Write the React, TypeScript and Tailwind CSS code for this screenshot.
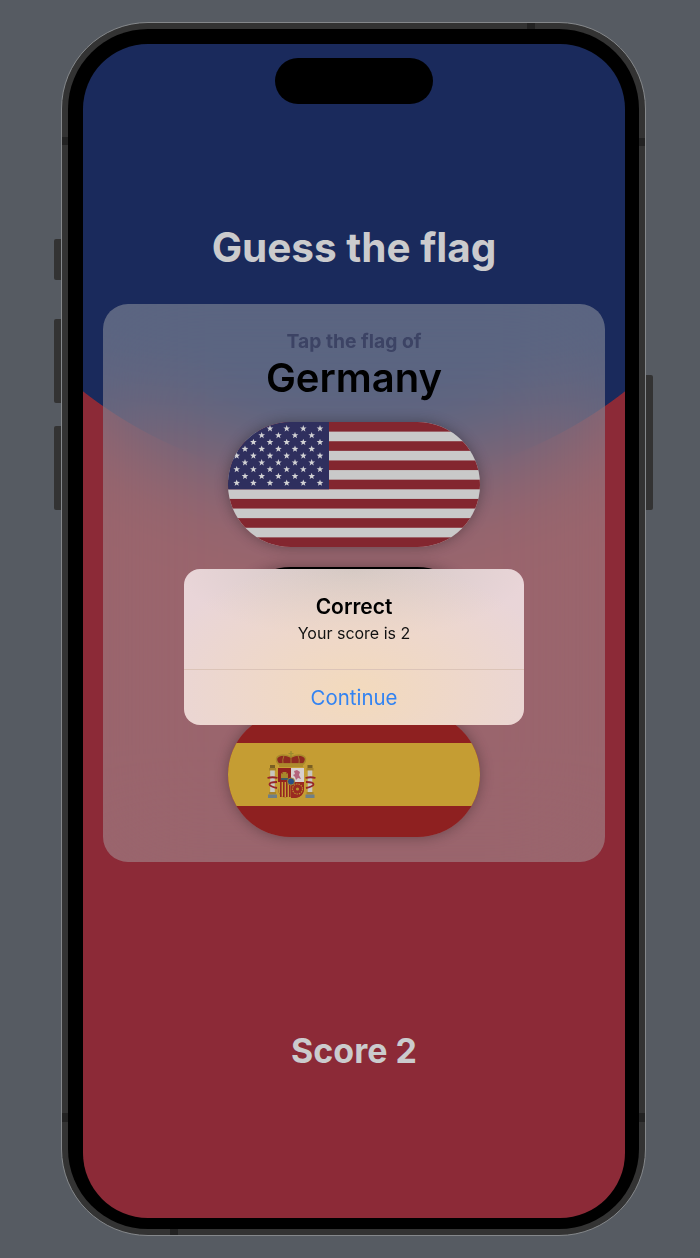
const starRows = [0, 1, 2, 3, 4, 5, 6, 7, 8];

function starPoints(cx: number, cy: number, r: number) {
  const pts: string[] = [];
  for (let i = 0; i < 10; i++) {
    const radius = i % 2 === 0 ? r : r * 0.42;
    const angle = (Math.PI / 5) * i - Math.PI / 2;
    pts.push(`${cx + radius * Math.cos(angle)},${cy + radius * Math.sin(angle)}`);
  }
  return pts.join(" ");
}

function UsaFlag() {
  const h = 125 / 13;
  return (
    <svg viewBox="0 0 252 125" className="block w-full h-full">
      <rect width="252" height="125" fill="#c9c9c9" />
      {[0, 2, 4, 6, 8, 10, 12].map((i) => (
        <rect key={i} y={i * h} width="252" height={h} fill="#83262f" />
      ))}
      <rect width="101" height={h * 7} fill="#2f2f5e" />
      {starRows.map((row) => {
        const odd = row % 2 === 1;
        const xs = odd ? [17, 33.7, 50.4, 67, 83.7] : [8.7, 25.4, 42, 58.7, 75.3, 92];
        return xs.map((x) => (
          <polygon key={`${row}-${x}`} points={starPoints(x, 6.6 + row * 6.8, 3.5)} fill="#d2d2d4" />
        ));
      })}
    </svg>
  );
}

function GermanyFlag() {
  return (
    <div className="flex flex-col w-full h-full">
      <div className="flex-1 bg-black" />
      <div className="flex-1 bg-[#b00000]" />
      <div className="flex-1 bg-[#d9b000]" />
    </div>
  );
}

function Pillar({ x }: { x: number }) {
  return (
    <g>
      <rect x={x + 2} y="53" width="5" height="3" fill="#7a5f24" />
      <rect x={x + 1} y="56" width="7" height="2.5" fill="#a8842a" />
      <rect x={x + 2.2} y="58.5" width="4.6" height="21.5" fill="#c8c6c0" />
      <rect x={x + 1} y="80" width="7" height="2.5" fill="#a8842a" />
      <rect x={x} y="82.5" width="9" height="3.5" fill="#6f7f86" />
    </g>
  );
}

function SpainFlag() {
  return (
    <svg viewBox="0 0 252 125" className="block w-full h-full">
      <rect width="252" height="125" fill="#8e2020" />
      <rect y="31" width="252" height="63" fill="#c59d33" />
      <Pillar x={40} />
      <Pillar x={77.5} />
      {/* ribbons */}
      <path d="M39.5 66 q5 -1.5 10 0 M49 70 q-8 0 -7.5 2.5 q0.5 2 7.5 3.5" fill="none" stroke="#97262a" strokeWidth="1.8" />
      <path d="M87.5 66 q-5 -1.5 -10 0 M78 70 q8 0 7.5 2.5 q-0.5 2 -7.5 3.5" fill="none" stroke="#97262a" strokeWidth="1.8" />
      {/* crown */}
      <path d="M50.5 52 C44 44 54 41 63 45 C72 41 82 44 75.5 52 Z" fill="#8e2a20" stroke="#a98a2c" strokeWidth="1.5" />
      <path d="M63 45 V52 M56 43.5 Q54 48 55 52 M70 43.5 Q72 48 71 52" fill="none" stroke="#a98a2c" strokeWidth="0.8" />
      <rect x="62.3" y="39" width="1.4" height="6" fill="#9a8a30" />
      <rect x="60.5" y="41" width="5" height="1.2" fill="#9a8a30" />
      <rect x="51" y="51.5" width="24" height="3.5" fill="#ad8a2c" />
      {/* shield */}
      <path d="M50 56 h26 v20 q0 9 -9 10 h-8 q-9 -1 -9 -10z" fill="#8e2020" />
      <rect x="63" y="56" width="13" height="14" fill="#d8d0d0" />
      <path d="M66 59 l3 -1 3 2 -1 3 2 4 -3 -1 -2 2 -1 -3 -2 -2 2 -1z" fill="#b5647c" />
      <rect x="50" y="56" width="13" height="14" fill="#92231e" />
      <path d="M53 66 v-5 l1.5 1 v-2 h4 v2 l1.5 -1 v5z" fill="#a8882c" />
      <rect x="53" y="66" width="7" height="2" fill="#3f5a66" />
      <path d="M50 70 h13 v16 h-4 q-9 -1 -9 -10z" fill="#c59d33" />
      {[52, 55, 58, 61].map((x) => (
        <rect key={x} x={x} y="70" width="1.6" height="15" fill="#942420" />
      ))}
      <path d="M63 70 h13 v6 q0 9 -9 10 h-4z" fill="#9a2a20" />
      <circle cx="69.5" cy="77" r="5" fill="none" stroke="#b8902c" strokeWidth="1.2" strokeDasharray="1.4 1" />
      <circle cx="69.5" cy="77" r="1.6" fill="#b8902c" />
      <circle cx="63" cy="69.5" r="3.6" fill="#2a4f85" stroke="#a8882c" strokeWidth="0.9" />
    </svg>
  );
}

function FlagButton({ children }: { children: React.ReactNode }) {
  return (
    <div className="w-[252px] h-[125px] rounded-full overflow-hidden shadow-[0_0_14px_rgba(0,0,0,0.32)]">
      {children}
    </div>
  );
}

export default function App() {
  return (
    <div className="w-[700px] h-[1258px] bg-[#565b62] pl-[61px] pt-[22px] font-['Inter',sans-serif]">
      <div className="relative w-[585px] h-[1214px] rounded-[87px] border border-[#85888b] bg-[#333333] p-[6px]">
        {/* side buttons */}
        <div className="absolute left-[-8px] top-[216px] w-[7px] h-[41px] rounded-l-[2px] bg-[#333333]" />
        <div className="absolute left-[-8px] top-[296px] w-[7px] h-[84px] rounded-l-[2px] bg-[#333333]" />
        <div className="absolute left-[-8px] top-[403px] w-[7px] h-[84px] rounded-l-[2px] bg-[#333333]" />
        <div className="absolute right-[-8px] top-[352px] w-[7px] h-[135px] rounded-r-[2px] bg-[#333333]" />
        {/* antenna bands */}
        <div className="absolute left-0 top-[114px] w-[6px] h-[8px] bg-[#222222]" />
        <div className="absolute right-0 top-[115px] w-[6px] h-[8px] bg-[#222222]" />
        <div className="absolute left-0 top-[1090px] w-[6px] h-[9px] bg-[#222222]" />
        <div className="absolute right-0 top-[1090px] w-[6px] h-[9px] bg-[#222222]" />
        <div className="absolute top-0 left-[465px] w-[8px] h-[6px] bg-[#222222]" />
        <div className="absolute bottom-0 left-[108px] w-[8px] h-[6px] bg-[#222222]" />

        <div className="w-full h-full rounded-[80px] bg-black p-[15px]">
          <div className="relative w-[542px] h-[1174px] rounded-[65px] overflow-hidden bg-[radial-gradient(circle_441px_at_271px_0px,#1a2a5c_99.8%,#8c2a37_100%)] flex flex-col items-center">
            <div className="absolute top-[14px] left-[192px] w-[158px] h-[46px] rounded-full bg-black" />

            <h1 className="mt-[180px] h-[48px] text-[40.5px] leading-[48px] font-bold text-[#cbcbcd]">
              Guess the flag
            </h1>

            <div className="mt-[32px] w-[502px] h-[558px] rounded-[25px] bg-[#abadb0]/45 backdrop-blur-[50px] flex flex-col items-center pt-[24px]">
              <p className="text-[19.3px] leading-[26px] font-bold text-[#3c4364]">Tap the flag of</p>
              <p className="text-[40px] leading-[48px] font-semibold text-black">Germany</p>
              <div className="mt-[20px] flex flex-col gap-[20px]">
                <FlagButton>
                  <UsaFlag />
                </FlagButton>
                <FlagButton>
                  <GermanyFlag />
                </FlagButton>
                <FlagButton>
                  <SpainFlag />
                </FlagButton>
              </div>
            </div>

            <p className="mt-[167px] text-[34px] leading-[44px] font-bold text-[#cbcbcd]">Score 2</p>

            {/* alert */}
            <div className="absolute left-[101px] top-[525px] w-[340px] h-[156px] rounded-[16px] overflow-hidden bg-[#e9d5d8] bg-[radial-gradient(ellipse_210px_135px_at_170px_125px,#f3dabc,transparent),radial-gradient(ellipse_175px_70px_at_170px_0px,#d3c8c5,transparent)] flex flex-col">
              <div className="h-[101px] flex flex-col items-center pt-[24px] border-b border-[#dcc4b8]">
                <p className="text-[21px] leading-[27px] font-semibold text-black">Correct</p>
                <p className="text-[16px] leading-[26px] text-[#111111]">Your score is 2</p>
              </div>
              <button className="flex-1 pt-[1px] text-[20.4px] text-[#3283f2]">Continue</button>
            </div>
          </div>
        </div>
      </div>
    </div>
  );
}
